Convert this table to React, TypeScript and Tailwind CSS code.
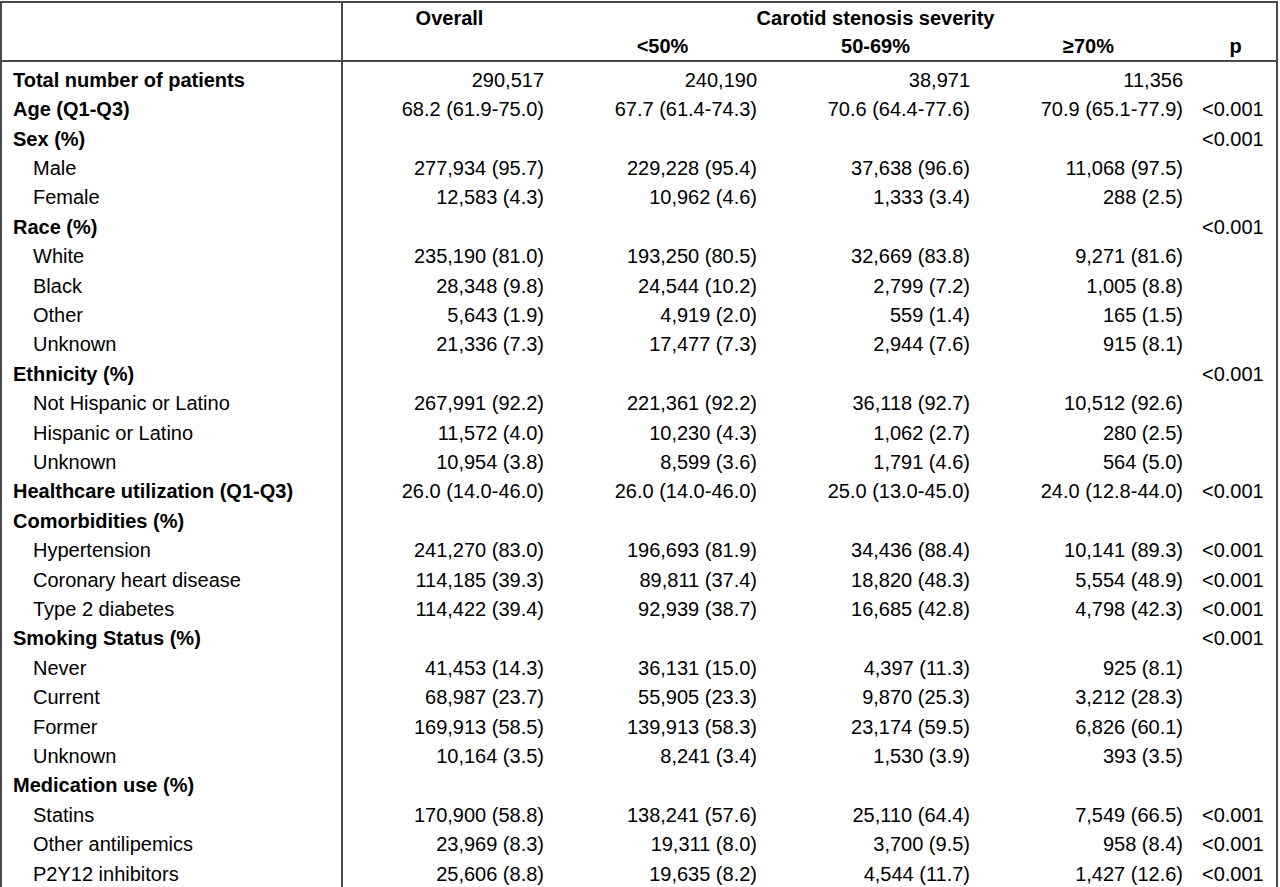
import React from "react";

type Row = { label: string; indent?: boolean; bold?: boolean; vals?: string[]; p?: string };

const rows: Row[] = [
  { label: "Total number of patients", bold: true, vals: ["290,517", "240,190", "38,971", "11,356"] },
  { label: "Age (Q1-Q3)", bold: true, vals: ["68.2 (61.9-75.0)", "67.7 (61.4-74.3)", "70.6 (64.4-77.6)", "70.9 (65.1-77.9)"], p: "<0.001" },
  { label: "Sex (%)", bold: true, p: "<0.001" },
  { label: "Male", indent: true, vals: ["277,934 (95.7)", "229,228 (95.4)", "37,638 (96.6)", "11,068 (97.5)"] },
  { label: "Female", indent: true, vals: ["12,583 (4.3)", "10,962 (4.6)", "1,333 (3.4)", "288 (2.5)"] },
  { label: "Race (%)", bold: true, p: "<0.001" },
  { label: "White", indent: true, vals: ["235,190 (81.0)", "193,250 (80.5)", "32,669 (83.8)", "9,271 (81.6)"] },
  { label: "Black", indent: true, vals: ["28,348 (9.8)", "24,544 (10.2)", "2,799 (7.2)", "1,005 (8.8)"] },
  { label: "Other", indent: true, vals: ["5,643 (1.9)", "4,919 (2.0)", "559 (1.4)", "165 (1.5)"] },
  { label: "Unknown", indent: true, vals: ["21,336 (7.3)", "17,477 (7.3)", "2,944 (7.6)", "915 (8.1)"] },
  { label: "Ethnicity (%)", bold: true, p: "<0.001" },
  { label: "Not Hispanic or Latino", indent: true, vals: ["267,991 (92.2)", "221,361 (92.2)", "36,118 (92.7)", "10,512 (92.6)"] },
  { label: "Hispanic or Latino", indent: true, vals: ["11,572 (4.0)", "10,230 (4.3)", "1,062 (2.7)", "280 (2.5)"] },
  { label: "Unknown", indent: true, vals: ["10,954 (3.8)", "8,599 (3.6)", "1,791 (4.6)", "564 (5.0)"] },
  { label: "Healthcare utilization (Q1-Q3)", bold: true, vals: ["26.0 (14.0-46.0)", "26.0 (14.0-46.0)", "25.0 (13.0-45.0)", "24.0 (12.8-44.0)"], p: "<0.001" },
  { label: "Comorbidities (%)", bold: true },
  { label: "Hypertension", indent: true, vals: ["241,270 (83.0)", "196,693 (81.9)", "34,436 (88.4)", "10,141 (89.3)"], p: "<0.001" },
  { label: "Coronary heart disease", indent: true, vals: ["114,185 (39.3)", "89,811 (37.4)", "18,820 (48.3)", "5,554 (48.9)"], p: "<0.001" },
  { label: "Type 2 diabetes", indent: true, vals: ["114,422 (39.4)", "92,939 (38.7)", "16,685 (42.8)", "4,798 (42.3)"], p: "<0.001" },
  { label: "Smoking Status (%)", bold: true, p: "<0.001" },
  { label: "Never", indent: true, vals: ["41,453 (14.3)", "36,131 (15.0)", "4,397 (11.3)", "925 (8.1)"] },
  { label: "Current", indent: true, vals: ["68,987 (23.7)", "55,905 (23.3)", "9,870 (25.3)", "3,212 (28.3)"] },
  { label: "Former", indent: true, vals: ["169,913 (58.5)", "139,913 (58.3)", "23,174 (59.5)", "6,826 (60.1)"] },
  { label: "Unknown", indent: true, vals: ["10,164 (3.5)", "8,241 (3.4)", "1,530 (3.9)", "393 (3.5)"] },
  { label: "Medication use (%)", bold: true },
  { label: "Statins", indent: true, vals: ["170,900 (58.8)", "138,241 (57.6)", "25,110 (64.4)", "7,549 (66.5)"], p: "<0.001" },
  { label: "Other antilipemics", indent: true, vals: ["23,969 (8.3)", "19,311 (8.0)", "3,700 (9.5)", "958 (8.4)"], p: "<0.001" },
  { label: "P2Y12 inhibitors", indent: true, vals: ["25,606 (8.8)", "19,635 (8.2)", "4,544 (11.7)", "1,427 (12.6)"], p: "<0.001" },
];

const cols = "grid grid-cols-[341px_213px_213px_213px_213px_81px]";

export default function App() {
  return (
    <div className="bg-white w-[1280px] h-[887px] overflow-hidden text-black text-[20px] font-['Liberation_Sans',Arial,sans-serif]">
      <div className="w-[1278px] mt-[1px] border-t-2 border-x-2 border-[#4a4a4a]">
        {/* header */}
        <div className={`${cols} border-b-2 border-[#4a4a4a]`}>
          <div className="row-span-2 border-r-2 border-[#4a4a4a]" />
          <div className="h-[28.5px] pt-[1px] flex items-center justify-center font-bold">Overall</div>
          <div className="col-span-3 h-[28.5px] pt-[1px] flex items-center justify-center font-bold">Carotid stenosis severity</div>
          <div />
          <div className="h-[28.5px]" />
          <div className="h-[28.5px] pt-[1px] flex items-center justify-center font-bold">&lt;50%</div>
          <div className="h-[28.5px] pt-[1px] flex items-center justify-center font-bold">50-69%</div>
          <div className="h-[28.5px] pt-[1px] flex items-center justify-center font-bold">≥70%</div>
          <div className="h-[28.5px] pt-[1px] flex items-center justify-center font-bold">p</div>
        </div>

        {/* body */}
        <div className={cols}>
          <div className="border-r-2 border-[#4a4a4a] pt-[3px]">
            {rows.map((r, i) => (
              <div key={i} className={`h-[29.42px] flex items-center whitespace-nowrap ${r.bold ? "font-bold pl-[11px]" : "pl-[31px]"}`}>
                {r.label}
              </div>
            ))}
          </div>
          {[0, 1, 2, 3].map((c) => (
            <div key={c} className="pt-[3px]">
              {rows.map((r, i) => (
                <div key={i} className="h-[29.42px] flex items-center justify-end pr-[12px] whitespace-nowrap">
                  {r.vals ? r.vals[c] : ""}
                </div>
              ))}
            </div>
          ))}
          <div className="pt-[3px]">
            {rows.map((r, i) => (
              <div key={i} className="h-[29.42px] flex items-center pl-[7px] whitespace-nowrap">
                {r.p ?? ""}
              </div>
            ))}
          </div>
        </div>
      </div>
    </div>
  );
}
